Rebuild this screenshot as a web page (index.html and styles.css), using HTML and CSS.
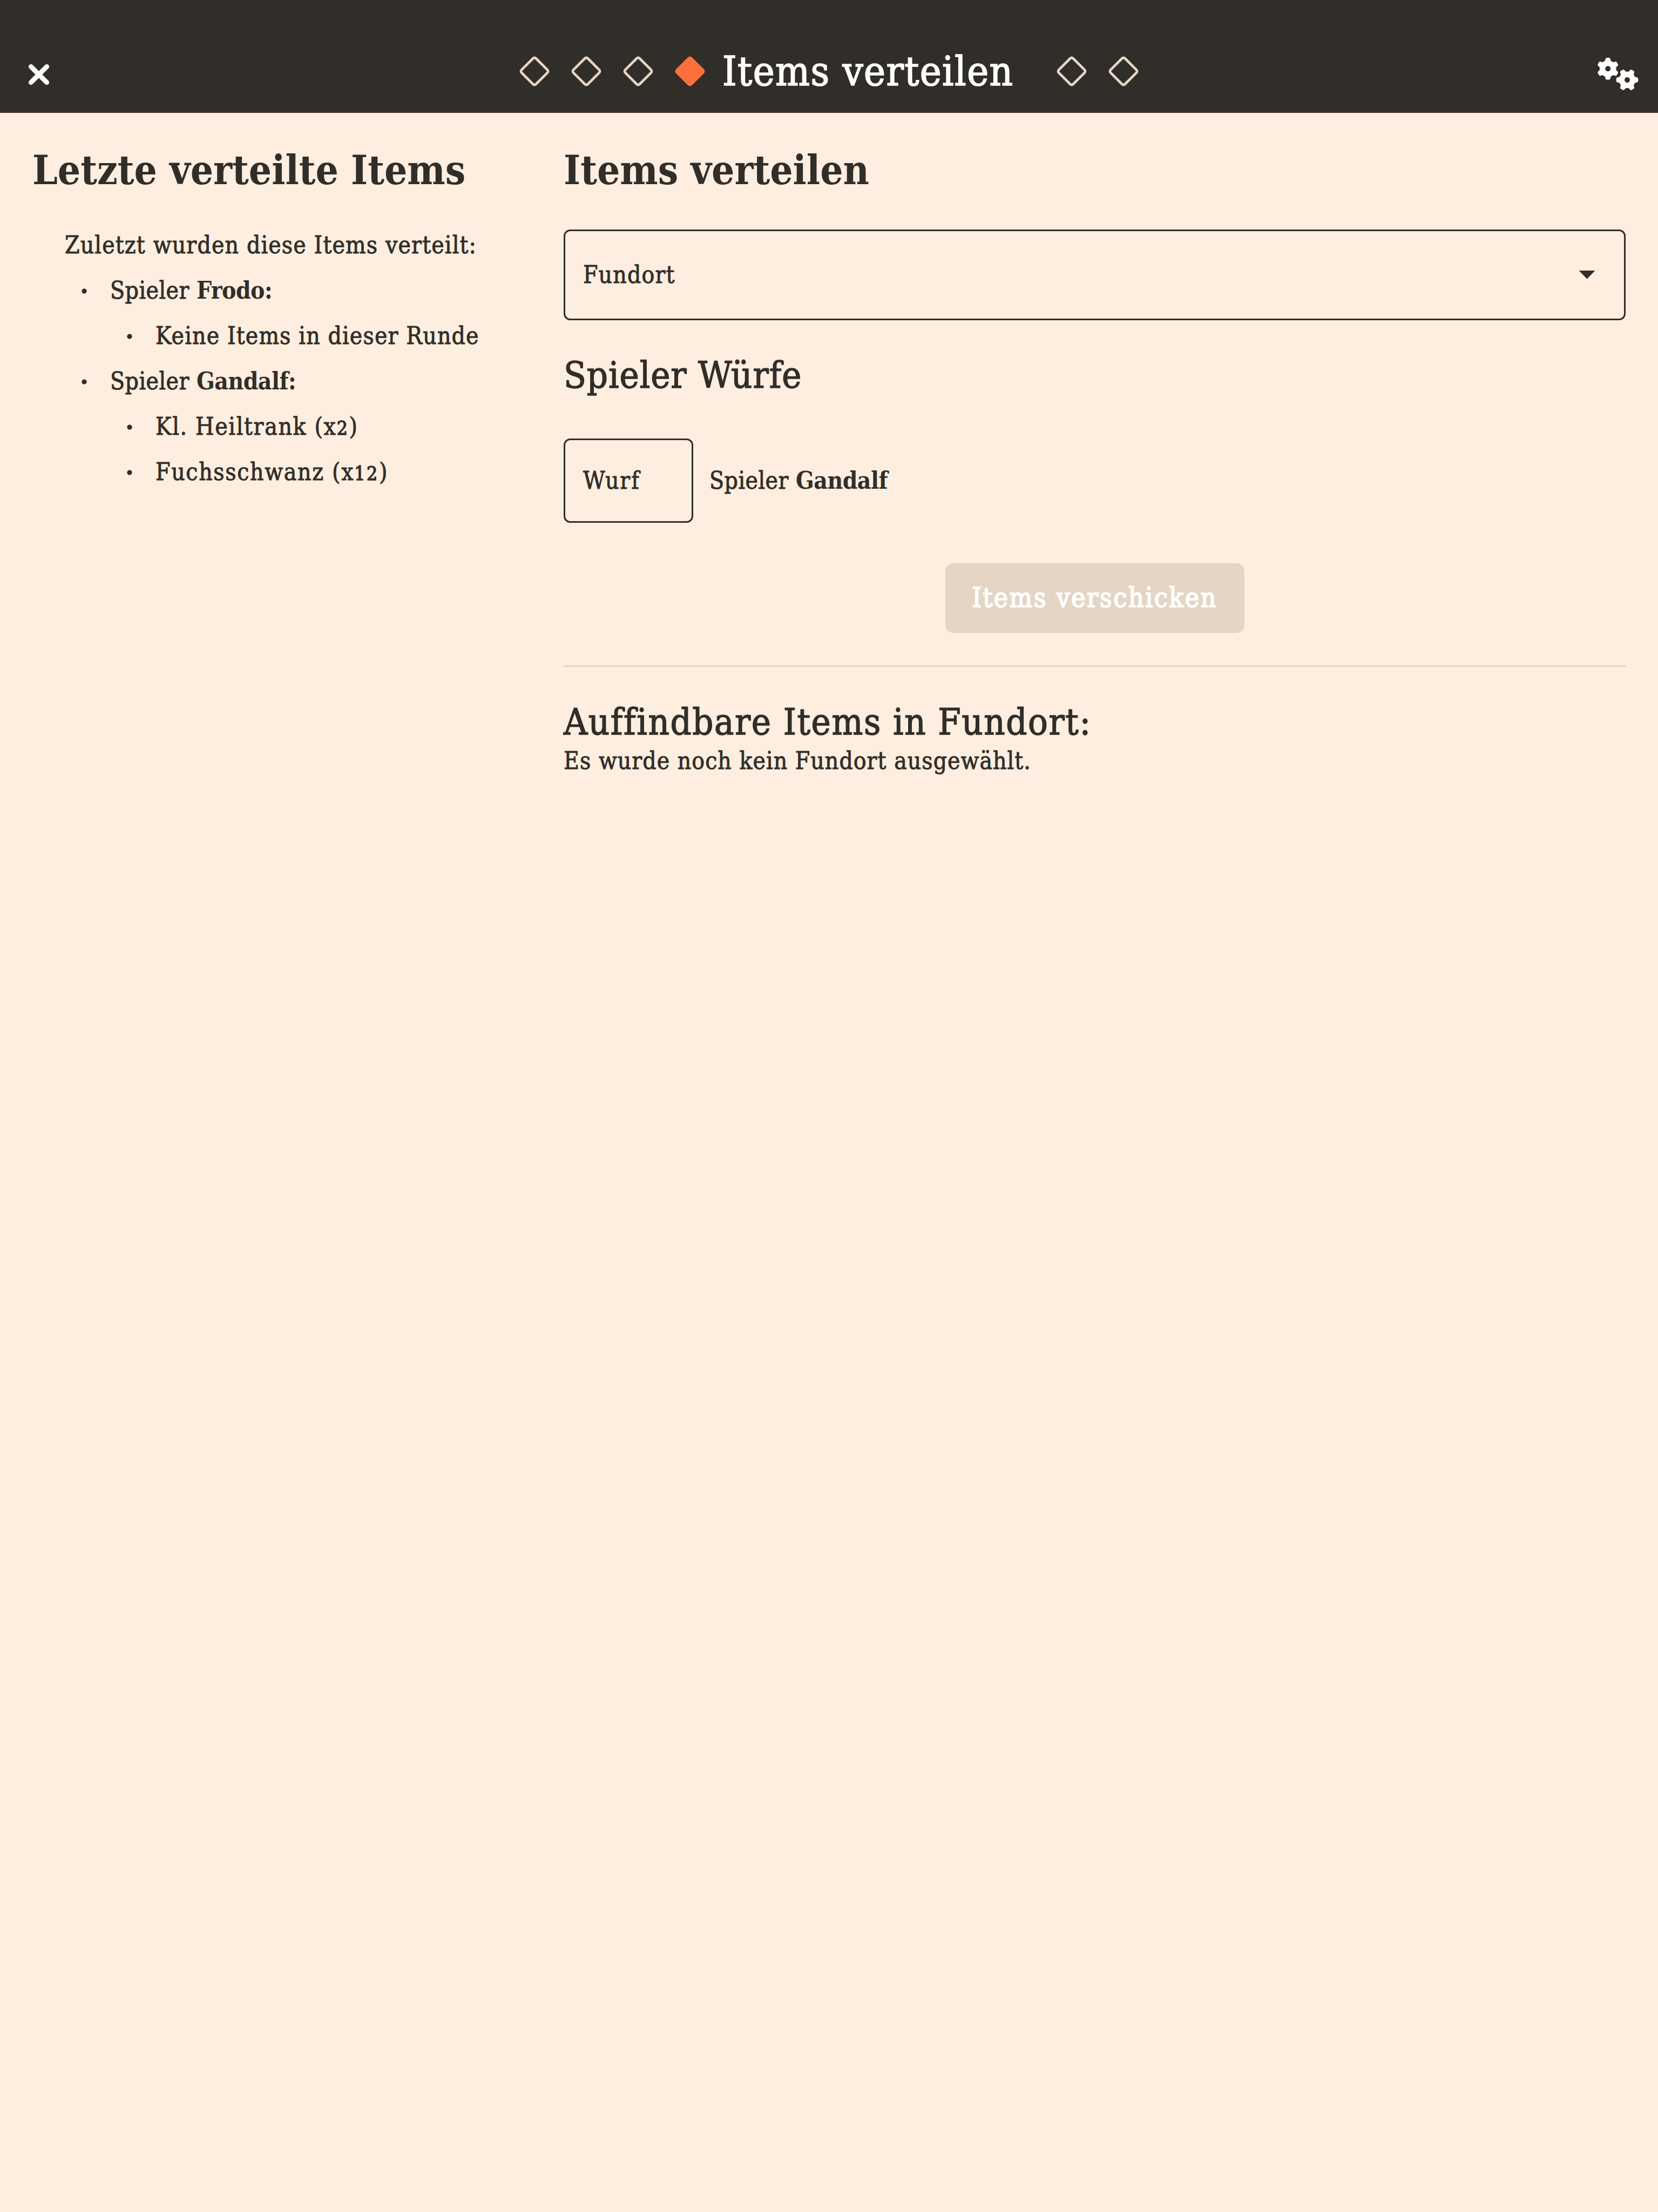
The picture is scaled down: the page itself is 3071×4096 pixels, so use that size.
FILE: index.html
```html
<!DOCTYPE html>
<html lang="de">
<head>
<meta charset="utf-8">
<title>Items verteilen</title>
<link rel="stylesheet" href="styles.css">
</head>
<body>
<svg class="defs" aria-hidden="true">
  <symbol id="step" viewBox="0 0 96 96"><rect x="29.25" y="29.25" width="37.5" height="37.5" rx="3.6" transform="rotate(45 48 48)" fill="none" stroke="#e5d5c4" stroke-width="4.7"/></symbol>
  <defs>
    <path id="tooth" d="M-7.5-13.2Q-5.3-14-5.1-15.5L-4.6-18Q-4.2-20.3-2-20.3L2-20.3Q4.2-20.3 4.6-18L5.1-15.5Q5.3-14 7.5-13.2L0 0Z"/>
    <g id="gear">
      <circle r="15"/>
      <use href="#tooth"/><use href="#tooth" transform="rotate(60)"/><use href="#tooth" transform="rotate(120)"/><use href="#tooth" transform="rotate(180)"/><use href="#tooth" transform="rotate(240)"/><use href="#tooth" transform="rotate(300)"/>
      <circle r="5" fill="#312e29"/>
    </g>
  </defs>
</svg>
<header class="bar">
  <svg class="close" viewBox="0 0 40 40"><path d="M5.4 5.4 34.6 34.6M34.6 5.4 5.4 34.6" stroke="#fff" stroke-width="9" stroke-linecap="round"/></svg>
  <nav class="stepper">
    <svg class="step"><use href="#step"/></svg>
    <svg class="step"><use href="#step"/></svg>
    <svg class="step"><use href="#step"/></svg>
    <svg class="step" viewBox="0 0 96 96"><rect x="27" y="27" width="42" height="42" rx="5.5" transform="rotate(45 48 48)" fill="#fb703c"/></svg>
    <div class="step-title">Items verteilen</div>
    <svg class="step"><use href="#step"/></svg>
    <svg class="step"><use href="#step"/></svg>
  </nav>
  <svg class="gears" viewBox="0 0 78 62" fill="#fff">
    <use href="#gear" transform="translate(20.2 21.2)"/>
    <use href="#gear" transform="translate(56 41.9) rotate(30)"/>
  </svg>
</header>
<main class="layout">
  <aside class="history">
    <h1>Letzte verteilte Items</h1>
    <div class="log">
      <p>Zuletzt wurden diese Items verteilt:</p>
      <ul>
        <li><span class="player">Spieler <b>Frodo:</b></span>
          <ul><li>Keine Items in dieser Runde</li></ul>
        </li>
        <li><span class="player">Spieler <b>Gandalf:</b></span>
          <ul>
            <li class="item">Kl. Heiltrank (x<span class="num">2</span>)</li>
            <li class="item">Fuchsschwanz (x<span class="num">12</span>)</li>
          </ul>
        </li>
      </ul>
    </div>
  </aside>
  <section class="distribute">
    <h1>Items verteilen</h1>
    <div class="select">Fundort<svg class="caret" viewBox="0 0 30 16"><path d="M0 0H30L15 15.5Z" fill="#312e29"/></svg></div>
    <h2 class="rolls">Spieler Würfe</h2>
    <div class="roll"><div class="input">Wurf</div><div class="player">Spieler <b>Gandalf</b></div></div>
    <button class="send" disabled>Items verschicken</button>
    <hr>
    <h2>Auffindbare Items in Fundort:</h2>
    <p class="hint">Es wurde noch kein Fundort ausgewählt.</p>
  </section>
</main>
</body>
</html>
```
FILE: styles.css
```css
* { box-sizing: border-box; }
body {
  margin: 0;
  min-height: 4096px;
  background: #fdeee0;
  color: #312e29;
  font: 44px/84px "DejaVu Serif Condensed", "DejaVu Serif", serif;
  letter-spacing: 0.0265em;
  -webkit-text-stroke: 0.9px currentColor;
}
.player { letter-spacing: 0.011em; }
b { letter-spacing: -0.012em; -webkit-text-stroke: 0; }
.defs { position: absolute; width: 0; height: 0; }
.bar {
  display: grid;
  grid-template-columns: 1fr auto 1fr;
  align-items: center;
  height: 209px;
  padding: 54px 35px 0 35px;
  background: #312e29;
  color: #fff;
}
.close { width: 40px; height: 40px; margin: 12px 0 0 17px; }
.stepper { display: flex; align-items: center; }
.step { width: 96px; height: 96px; }
.step-title {
  width: 611px;
  padding-left: 12px;
  font-size: 75px;
  line-height: 96px;
  letter-spacing: 0.0195em;
  white-space: nowrap;
  -webkit-text-stroke-width: 1.7px;
}
.gears { width: 78px; height: 62px; justify-self: end; margin-top: 10px; }
.layout { display: grid; grid-template-columns: 984px 1fr; padding: 58px 60px 0; }
h1, h2, p, ul { margin: 0; padding: 0; font-weight: 400; white-space: nowrap; }
h1 { font-size: 74px; line-height: 96px; font-weight: 700; letter-spacing: 0; -webkit-text-stroke: 0; }
h2 { margin-top: 57px; font-size: 68px; line-height: 90px; letter-spacing: 0.0235em; -webkit-text-stroke-width: 1.4px; }
.rolls { letter-spacing: 0.0142em; }
.log { padding: 49px 0 0 60px; }
ul { list-style: none; }
li { padding-left: 84px; background: radial-gradient(circle at 36px 43px, #312e29 4.2px, transparent 5px); }
.item { letter-spacing: 0.038em; }
.num { font-size: 0.8em; line-height: 0; letter-spacing: 0.08em; -webkit-text-stroke-width: 1.4px; }
.select {
  display: flex; align-items: center; justify-content: space-between;
  height: 168px; margin-top: 62px; padding: 0 53px 0 33px;
  border: 3px solid #312e29; border-radius: 12px;
}
.caret { width: 31px; height: 16px; }
.roll { display: flex; align-items: center; gap: 30px; margin-top: 72px; }
.input {
  width: 240px; height: 156px; padding: 33px 33px;
  border: 3px solid #312e29; border-radius: 12px; letter-spacing: 0.045em;
}
.send {
  display: flex; align-items: center; justify-content: center;
  width: 554px; height: 129px; margin: 75px auto 60px; padding: 0 0 2px;
  border: 0; border-radius: 15px; background: #e5d5c4; color: #fff;
  font: 400 50px/64px "DejaVu Serif Condensed", "DejaVu Serif", serif;
  letter-spacing: 0.046em;
  -webkit-text-stroke: 1.9px currentColor;
}
hr { height: 3px; margin: 0; border: 0; background: #e5d5c4; }
.hint { line-height: 54px; letter-spacing: 0.0236em; }
```
